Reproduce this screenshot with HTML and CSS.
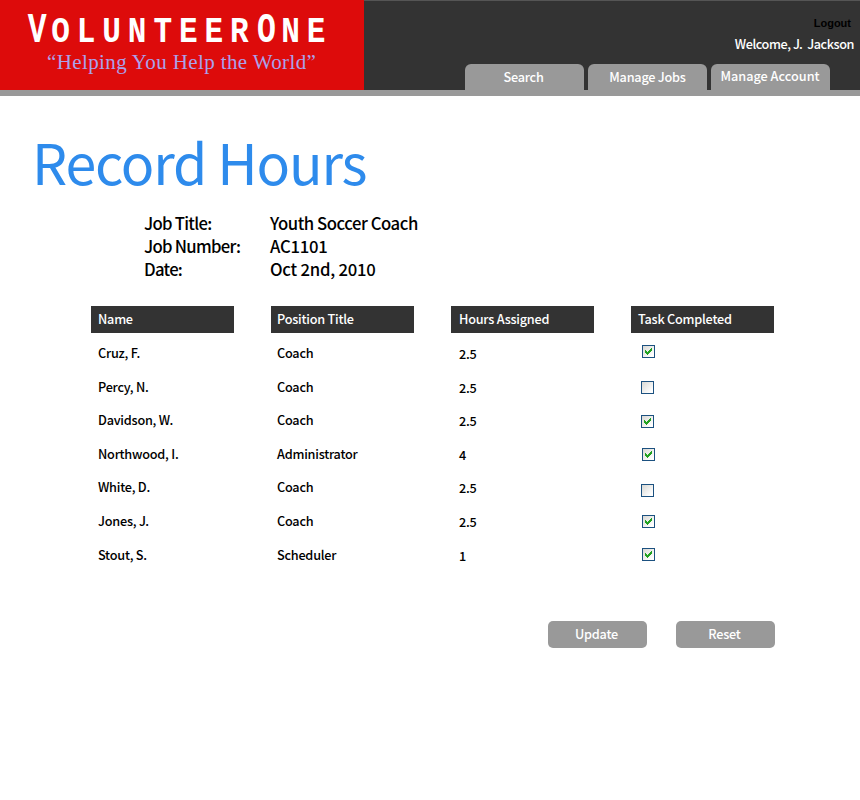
FILE: index.html
```html
<!DOCTYPE html>
<html lang="en">
<head>
<meta charset="utf-8">
<title>VolunteerOne - Record Hours</title>
<link rel="stylesheet" href="styles.css">
</head>
<body>
<header class="header">
  <div class="brand">
    <div class="logo"><span class="cap">V</span>OLUNTEER<span class="cap">O</span>NE</div>
    <div class="tagline">“Helping You Help the World”</div>
  </div>
  <div class="tools">
    <a class="logout">Logout</a>
    <div class="welcome">Welcome, J.&nbsp; Jackson</div>
    <nav class="tabs"><a class="tab search">Search</a><a class="tab">Manage Jobs</a><a class="tab raised">Manage Account</a></nav>
  </div>
</header>
<main>
  <h1>Record Hours</h1>
  <dl class="job">
    <dt>Job Title:</dt><dd>Youth Soccer Coach</dd>
    <dt>Job Number:</dt><dd class="figures">AC1101</dd>
    <dt>Date:</dt><dd class="figures">Oct 2nd, 2010</dd>
  </dl>
  <section class="table">
    <div class="col">
      <h2>Name</h2>
      <p>Cruz, F.</p><p>Percy, N.</p><p>Davidson, W.</p><p>Northwood, I.</p><p>White, D.</p><p>Jones, J.</p><p>Stout, S.</p>
    </div>
    <div class="col position">
      <h2>Position Title</h2>
      <p>Coach</p><p>Coach</p><p>Coach</p><p>Administrator</p><p>Coach</p><p>Coach</p><p>Scheduler</p>
    </div>
    <div class="col hours">
      <h2>Hours Assigned</h2>
      <p>2.5</p><p>2.5</p><p>2.5</p><p>4</p><p>2.5</p><p>2.5</p><p>1</p>
    </div>
    <div class="col done">
      <h2>Task Completed</h2>
      <div class="check c1"><svg viewBox="0 0 13 13"><use href="#tick"/></svg></div>
      <div class="check c2"></div>
      <div class="check c3"><svg viewBox="0 0 13 13"><use href="#tick"/></svg></div>
      <div class="check c4"><svg viewBox="0 0 13 13"><use href="#tick"/></svg></div>
      <div class="check c5"></div>
      <div class="check c6"><svg viewBox="0 0 13 13"><use href="#tick"/></svg></div>
      <div class="check c7"><svg viewBox="0 0 13 13"><use href="#tick"/></svg></div>
    </div>
  </section>
  <div class="actions"><button>Update</button><button>Reset</button></div>
</main>
<svg class="defs"><path id="tick" d="M3 5h1v1h1v1h1v-1h1v-1h1v-1h1v-1h1v3h-1v1h-1v1h-1v1h-1v1h-1v-1h-1v-1h-1z"/></svg>
</body>
</html>
```
FILE: styles.css
```css
* { box-sizing: border-box; }
body { margin: 0; background: #fff; color: #000; font: 500 12.7px/20px "Noto Sans CJK JP", "Noto Sans", sans-serif; letter-spacing: -.24px; }
h1, h2, p, dl, dd { margin: 0; font-weight: inherit; }
.header { display: flex; height: 96px; background: #333; border-bottom: 6px solid #999; }
.brand { width: 364px; height: 90px; background: #dd0b0b; color: #fff; }
.logo { height: 50px; padding: 4px 0 0 30.5px; font: bold 37px/56px "Liberation Mono", monospace; letter-spacing: 8.2px; white-space: nowrap; transform: scaleX(.84); transform-origin: 0 0; }
.cap { display: inline-block; width: 30.5px; font-size: 43px; line-height: 50px; letter-spacing: 0; transform: scaleX(.87); }
.tagline { padding-left: 47px; font: 21px/25px "Liberation Serif", serif; letter-spacing: .38px; color: #aaa2ea; white-space: nowrap; }
.tools { flex: 1; display: flex; flex-direction: column; align-items: flex-end; border-top: 1px solid #555; }
.logout { margin: 12px 9px 0 0; font: bold 11px/20px "Liberation Sans", sans-serif; letter-spacing: 0; color: #000; }
.welcome { margin: 1px 6px 0 0; color: #fff; letter-spacing: -.45px; }
.tabs { display: flex; gap: 4px; margin: 10px 30px 0 0; }
.tab { width: 119px; height: 26px; border-radius: 6px 6px 0 0; background: #999; color: #fff; text-align: center; line-height: 25px; }
.search { padding-right: 2px; }
.raised { line-height: 23px; letter-spacing: 0; padding-right: 1px; }
h1 { padding: 26px 0 0 32px; font-size: 55.5px; line-height: 79px; font-weight: 400; color: #2e8bec; letter-spacing: -1.2px; }
.job { display: grid; grid-template-columns: 126px 1fr; padding: 11px 0 0 144px; font-size: 16.7px; line-height: 23px; letter-spacing: -.45px; }
dt { letter-spacing: -.72px; }
.job .figures { letter-spacing: -.23px; }
.table { display: flex; gap: 37px; margin: 25px 0 0 91px; }
.col { width: 143px; }
h2 { height: 27px; margin-bottom: 3px; padding-left: 7px; background: #333; color: #fff; font-size: inherit; line-height: 25px; }
p { height: 33.6px; padding-left: 7px; line-height: 34px; }
.position h2, .position p { padding-left: 6px; }
.hours h2, .hours p { padding-left: 8px; }
.hours p { position: relative; top: 1px; }
.check { width: 13px; height: 13px; margin-left: 11px; border: 1px solid #1c5180; background: linear-gradient(135deg, #d8d8d4, #fff 85%); }
.check svg { display: block; width: 13px; height: 13px; margin: -1px; fill: #21a121; shape-rendering: crispEdges; }
.c1 { margin-top: 12px; }
.c2 { margin: 23px 0 0 10px; }
.c3 { margin: 21px 0 0 10px; }
.c4 { margin-top: 20px; }
.c5 { margin: 23px 0 0 10px; }
.c6 { margin-top: 18px; }
.c7 { margin-top: 20px; }
.actions { display: flex; gap: 29px; margin: 50px 0 0 548px; }
button { width: 99px; height: 27px; padding: 0 2px 2px 0; border: 0; border-radius: 5px; background: #999; color: #fff; font: inherit; letter-spacing: inherit; }
.defs { display: none; }
```
